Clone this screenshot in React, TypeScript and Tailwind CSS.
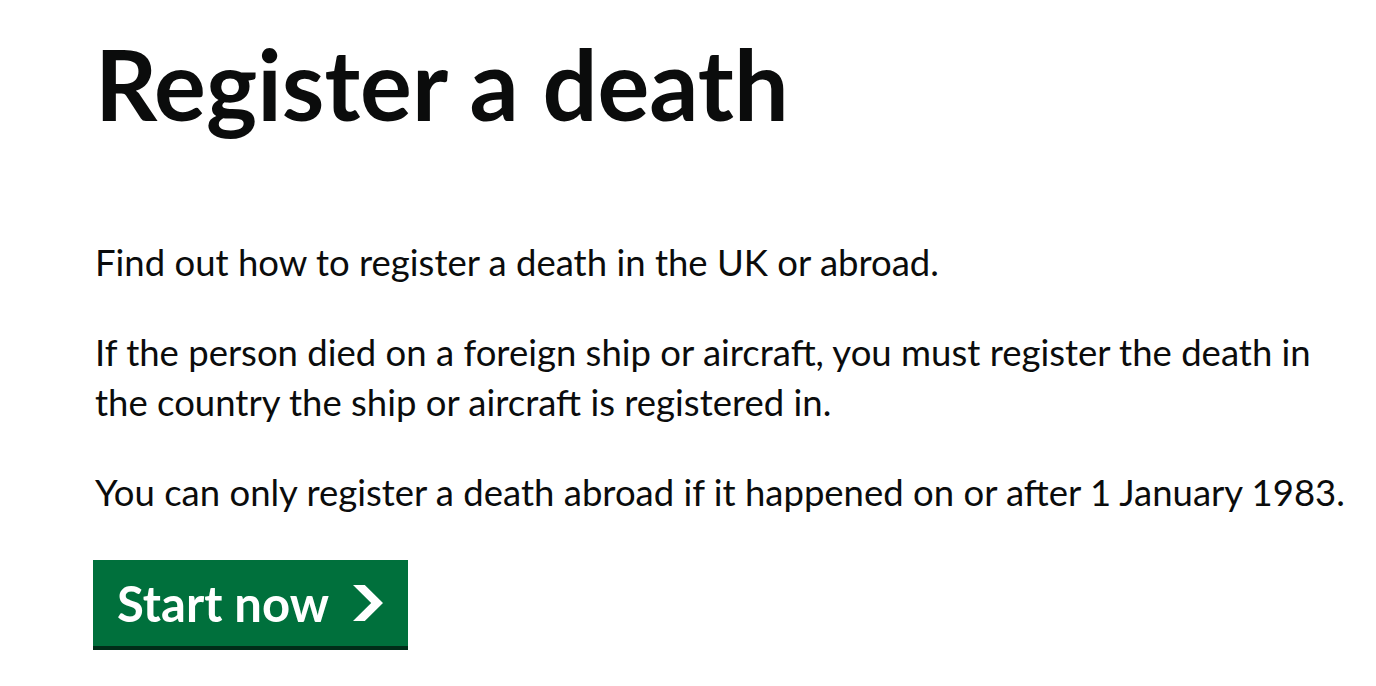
import React from 'react';

export default function App() {
  return (
    <div className="min-h-screen bg-white font-['Lato',sans-serif] text-[#0b0c0c]">
      <main className="pl-[95px] pt-[34px]">
        <h1 className="mb-[103px] text-[97px] font-bold leading-[100px]">Register a death</h1>

        <div className="max-w-[1262px] text-[36.5px] leading-[50px]">
          <p className="mb-10">Find out how to register a death in the UK or abroad.</p>
          <p className="mb-10">
            If the person died on a foreign ship or aircraft, you must register the death in the country the ship or
            aircraft is registered in.
          </p>
          <p className="mb-[43px]">You can only register a death abroad if it happened on or after 1 January 1983.</p>
        </div>

        <a
          href="#"
          className="-ml-[2px] inline-flex h-[86px] items-center bg-[#00703c] pl-[24px] pr-[25px] text-[49px] font-bold leading-none text-white shadow-[0_4px_0_#002d18]"
        >
          <span>Start now</span>
          <svg className="ml-[24px] h-[36px] w-[30px]" viewBox="0 0 33 40" preserveAspectRatio="none" aria-hidden="true">
            <path fill="currentColor" d="M0 0h13l20 20-20 20H0l20-20z" />
          </svg>
        </a>
      </main>
    </div>
  );
}
